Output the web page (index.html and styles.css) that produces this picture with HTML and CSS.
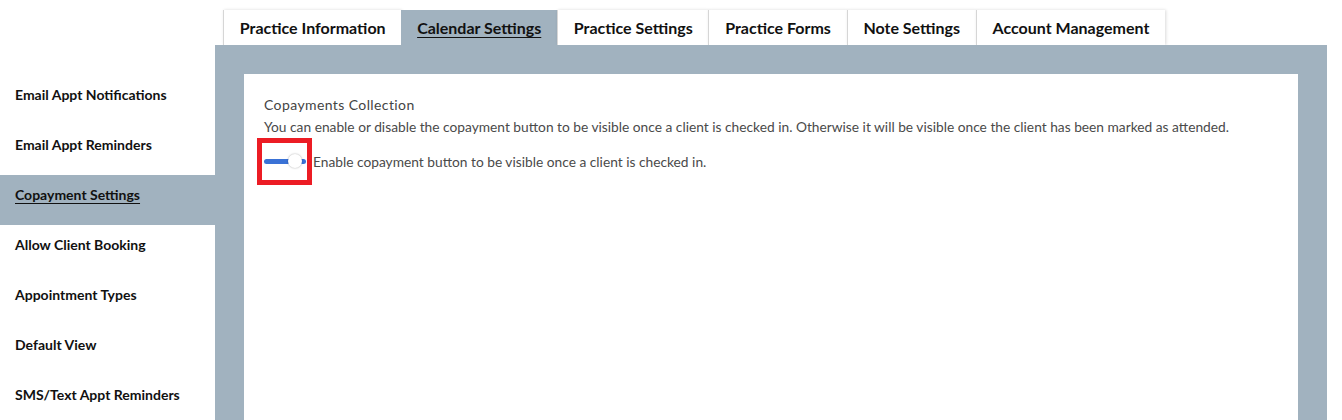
FILE: index.html
```html
<!DOCTYPE html>
<html lang="en">
<head>
    <meta charset="UTF-8">
    <meta name="viewport" content="width=device-width, initial-scale=1.0">
    <title>Calendar Settings</title>
    <link rel="stylesheet" href="styles.css">
</head>
<body>
    <!-- Top tabs -->
    <div class="tabs">
        <a class="tab">Practice Information</a>
        <a class="tab active">Calendar Settings</a>
        <a class="tab">Practice Settings</a>
        <a class="tab">Practice Forms</a>
        <a class="tab">Note Settings</a>
        <a class="tab">Account Management</a>
    </div>

    <div class="main">
        <!-- Side menu -->
        <ul class="side-menu">
            <li>Email Appt Notifications</li>
            <li>Email Appt Reminders</li>
            <li class="active"><span>Copayment Settings</span></li>
            <li>Allow Client Booking</li>
            <li>Appointment Types</li>
            <li>Default View</li>
            <li>SMS/Text Appt Reminders</li>
        </ul>

        <div class="panel">
            <div class="card">
                <div class="section-title">Copayments Collection</div>
                <p class="section-desc">You can enable or disable the copayment button to be visible once a client is checked in. Otherwise it will be visible once the client has been marked as attended.</p>
                <div class="toggle-row">
                    <span class="highlight">
                        <span class="toggle"><span class="knob"></span></span>
                    </span>
                    <label>Enable copayment button to be visible once a client is checked in.</label>
                </div>
            </div>
        </div>
    </div>
</body>
</html>
```

FILE: styles.css
```css
body {
    margin: 0;
    font-family: Lato, "Open Sans", sans-serif;
    background-color: #fff;
    color: #111;
    height: 420px;
    overflow: hidden;
}
.tabs {
    display: flex;
    padding: 10px 0 0 223px;
    height: 35px;
}
.tab {
    display: flex;
    align-items: center;
    padding: 0 15.75px;
    font-size: 16px;
    font-weight: bold;
    color: #111;
    background-color: #fff;
    border-left: 1px solid #d6d6d6;
    box-shadow: 1px 0 3px rgba(0, 0, 0, 0.15);
    white-space: nowrap;
}
.tab.active {
    background-color: #a1b2bf;
    text-decoration: underline;
    text-underline-offset: 3px;
    box-shadow: none;
    border-left: none;
}
.main {
    display: flex;
    height: 375px;
}
.side-menu {
    list-style: none;
    margin: 0;
    padding: 30px 0 0 0;
    width: 215px;
    flex-shrink: 0;
}
.side-menu li {
    height: 50px;
    display: flex;
    align-items: center;
    padding: 0 0 12px 15px;
    box-sizing: border-box;
    font-size: 14px;
    font-weight: bold;
    color: #111;
}
.side-menu li.active {
    background-color: #a1b2bf;
}
.side-menu li.active span {
    text-decoration: underline;
    text-underline-offset: 3px;
}
.panel {
    width: 1112px;
    background-color: #a1b2bf;
    padding: 29px 29px 0 29px;
    box-sizing: border-box;
}
.card {
    background-color: #fff;
    height: 100%;
    padding: 22px 20px 0 20px;
    box-sizing: border-box;
    color: #4a4a4a;
    font-size: 14px;
}
.section-title {
    font-size: 14px;
    letter-spacing: 0.4px;
    color: #444;
}
.section-desc {
    margin: 5px 0 0 0;
    font-size: 13.75px;
    color: #4a4a4a;
}
.toggle-row {
    display: flex;
    align-items: center;
    margin-top: 3px;
    margin-left: -7px;
    font-size: 13.75px;
}
.highlight {
    display: flex;
    align-items: center;
    justify-content: center;
    width: 55px;
    height: 47px;
    border: 5px solid #ec1c24;
    box-sizing: border-box;
    margin-right: 1px;
}
.toggle {
    position: relative;
    display: block;
    width: 42px;
    height: 5px;
    border-radius: 3px;
    background-color: #3a72d6;
}
.knob {
    position: absolute;
    right: 4px;
    top: -5px;
    width: 14px;
    height: 14px;
    border-radius: 50%;
    background-color: #fff;
    box-shadow: 0 0 2px rgba(0, 0, 0, 0.35);
}
```
